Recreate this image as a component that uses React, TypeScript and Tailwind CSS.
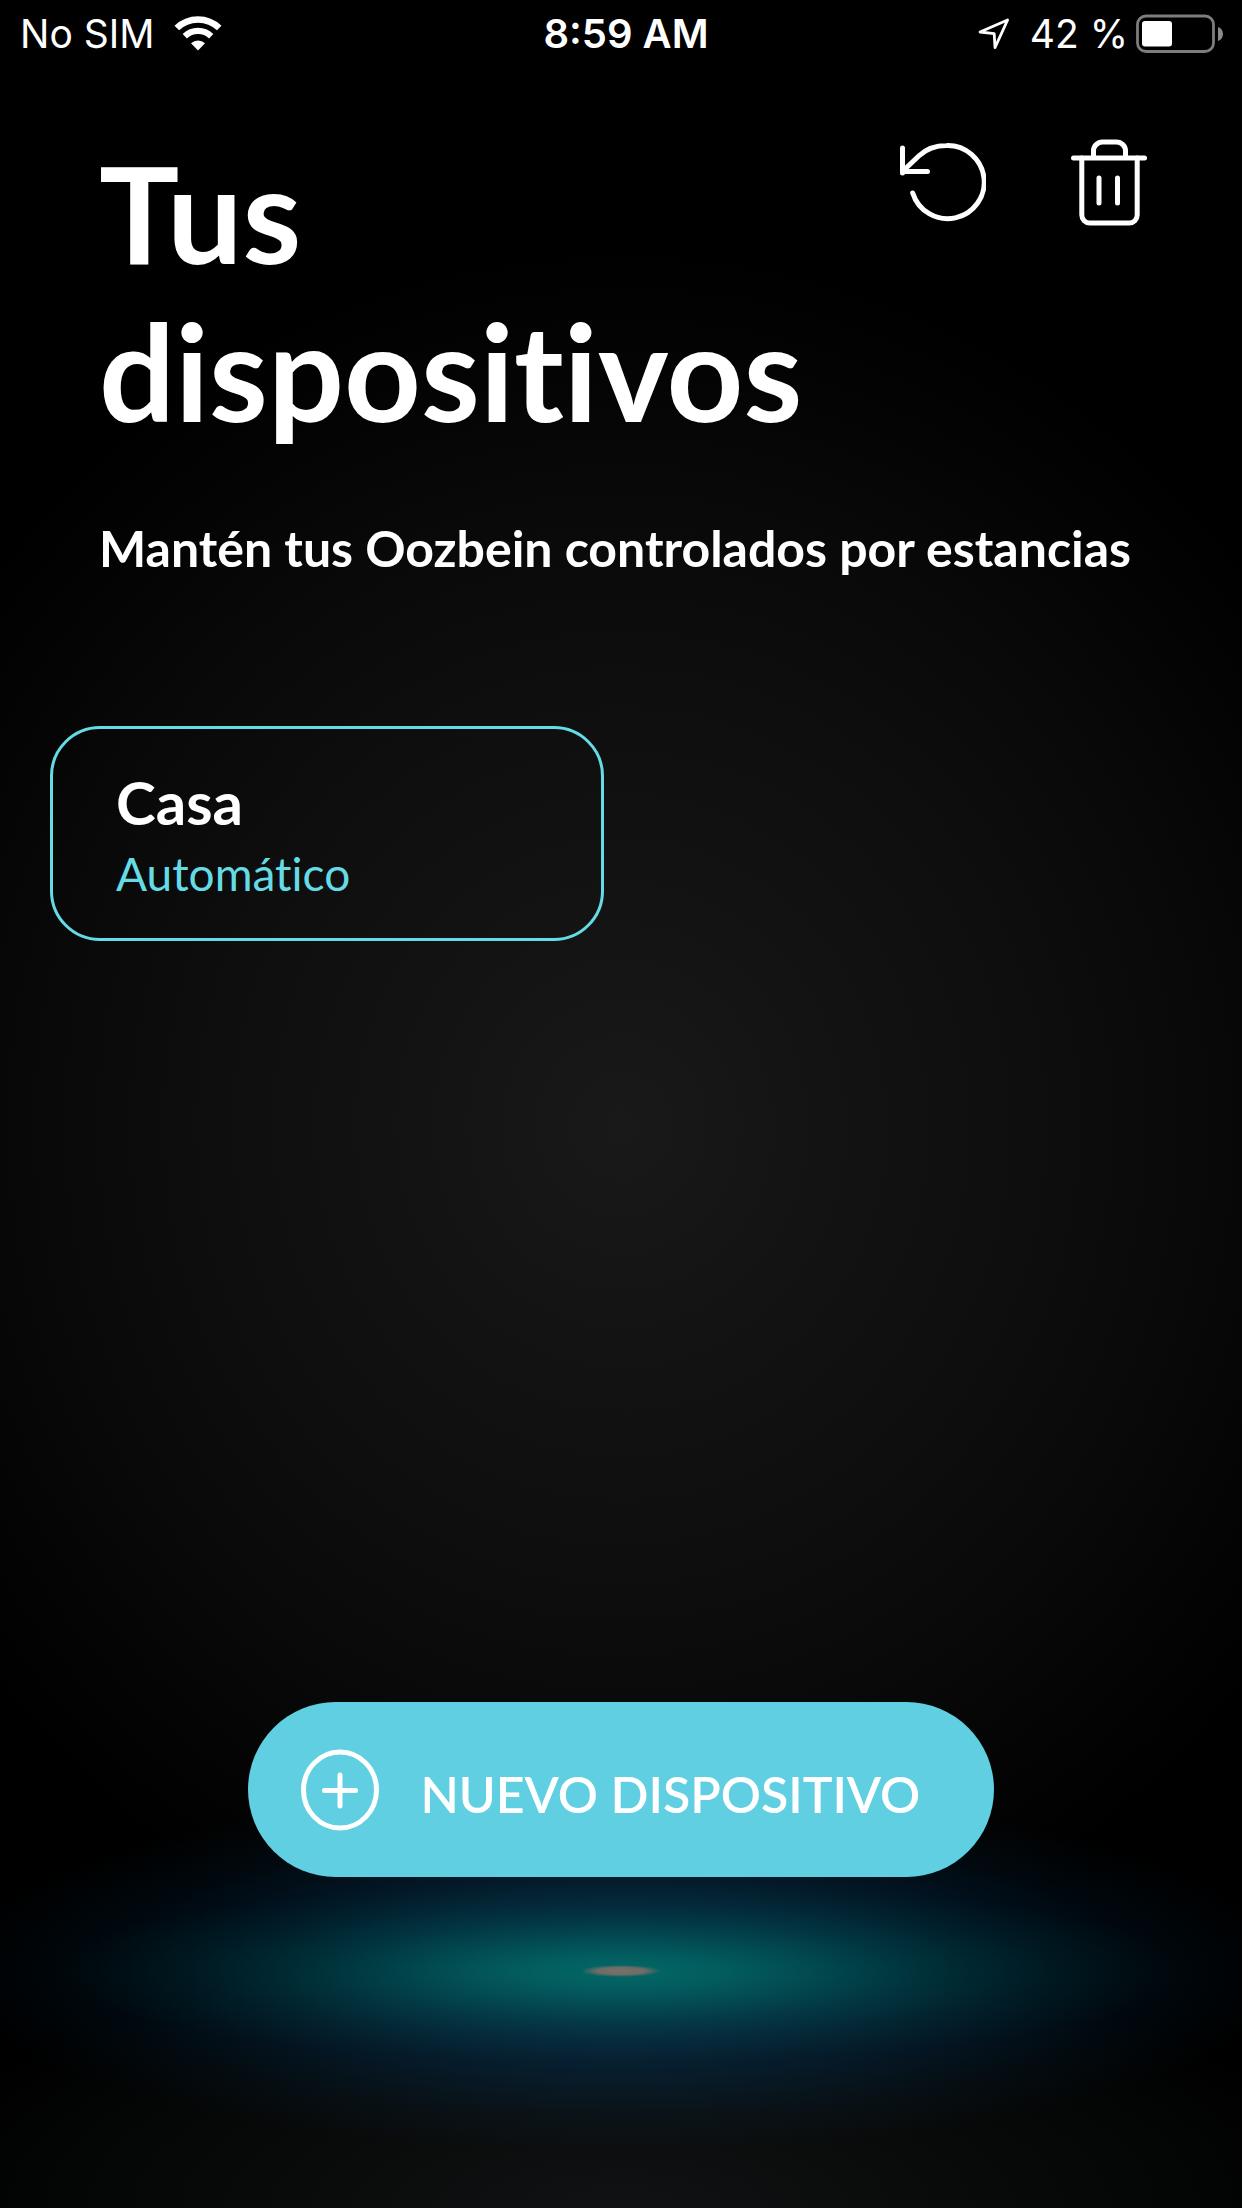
import type { ReactNode } from "react";

type Device = { id: string; name: string; mode: string };

const DEVICES: Device[] = [{ id: "casa", name: "Casa", mode: "Automático" }];

function WifiIcon() {
  return (
    <svg width="48" height="36" viewBox="0 0 48 36" fill="none" aria-hidden="true">
      <path d="M24 34.5 17 27.2a10.2 10.2 0 0 1 14 0Z" fill="#fff" />
      <path d="M10.8 20.2a19 19 0 0 1 26.4 0" stroke="#fff" strokeWidth="6.2" />
      <path d="M2.8 12a30.5 30.5 0 0 1 42.4 0" stroke="#fff" strokeWidth="6.6" />
    </svg>
  );
}

function LocationIcon() {
  return (
    <svg width="32" height="32" viewBox="0 0 32 32" fill="none" aria-hidden="true">
      <path
        d="M29.6 2 2 14l14.2 1.6L17 29.6Z"
        stroke="#fff"
        strokeWidth="2.8"
        strokeLinejoin="round"
      />
    </svg>
  );
}

function BatteryIcon() {
  return (
    <svg width="88" height="40" viewBox="0 0 88 40" fill="none" aria-hidden="true">
      <rect x="1.5" y="2" width="76" height="35.5" rx="8.5" stroke="#7d7d7d" strokeWidth="2.8" />
      <rect x="6" y="7" width="30" height="25.5" rx="3" fill="#fff" />
      <path d="M82 13c3 1 5 3.5 5 7s-2 6-5 7Z" fill="#8a8a8a" />
    </svg>
  );
}

function ResetIcon() {
  return (
    <svg width="88" height="84" viewBox="0 0 88 84" fill="none" aria-hidden="true">
      <g stroke="#fff" strokeWidth="5" strokeLinecap="round" strokeLinejoin="round">
        <path d="M5.5 30.5 21 15.8C28 9.2 36 5.5 48.5 5.5A36.6 36.6 0 1 1 14.7 53" />
        <path d="M4.5 8v25M4.5 31.5h25" />
      </g>
    </svg>
  );
}

function TrashIcon() {
  return (
    <svg width="78" height="88" viewBox="0 0 78 88" fill="none" aria-hidden="true">
      <g stroke="#fff" strokeWidth="5" strokeLinecap="round" strokeLinejoin="round">
        <path d="M3.5 20h71" />
        <path d="M23.5 19v-6a9 9 0 0 1 9-9h14a9 9 0 0 1 9 9v6" />
        <path d="M11.8 20v57a8 8 0 0 0 8 8h39.4a8 8 0 0 0 8-8V20" />
        <path d="M29 40v25M47.5 40v25" />
      </g>
    </svg>
  );
}

function PlusIcon() {
  return (
    <svg width="80" height="84" viewBox="0 0 80 84" fill="none" aria-hidden="true">
      <ellipse cx="40" cy="42" rx="36.5" ry="38" stroke="#fff" strokeWidth="5" />
      <path d="M40 27v31M24.5 42.5h31" stroke="#fff" strokeWidth="5" strokeLinecap="round" />
    </svg>
  );
}

function StatusBar() {
  return (
    <div className="grid h-[68px] grid-cols-[1fr_auto_1fr] items-center pr-[18px] pl-5 font-['Inter',sans-serif] text-[39px] leading-[48px]">
      <div className="flex items-center gap-5">
        <span>No SIM</span>
        <WifiIcon />
      </div>
      <span className="pl-2 text-[40px] font-semibold">8:59 AM</span>
      <div className="flex items-center justify-end">
        <LocationIcon />
        <span className="ml-5">42 %</span>
        <span className="ml-2">
          <BatteryIcon />
        </span>
      </div>
    </div>
  );
}

function IconButton({ label, children }: { label: string; children: ReactNode }) {
  return (
    <button type="button" aria-label={label} className="cursor-pointer">
      {children}
    </button>
  );
}

function DeviceCard({ device }: { device: Device }) {
  return (
    <button
      type="button"
      className="cursor-pointer rounded-[50px] border-[3px] border-[#65dbe6] px-[63px] pt-[37px] pb-[34px] text-left"
    >
      <span className="block text-[60px] leading-[72px] font-bold">{device.name}</span>
      <span className="block pt-[5px] text-[46px] leading-[61px] text-[#65dbe6]">
        {device.mode}
      </span>
    </button>
  );
}

// Dim spot mid-screen, faint floor light, then the flare under the button
function Backdrop() {
  return (
    <div className="absolute inset-0 -z-10 bg-black bg-[radial-gradient(ellipse_66%_40%_at_50%_51%,#191919_0%,#131313_25%,#0e0e0e_50%,#090909_70%,#040404_86%,#000000_100%)]">
      <div className="absolute inset-x-0 bottom-0 h-[474px] bg-[radial-gradient(ellipse_40px_6px_at_50%_50%,#781004_0%,#6b0c06_60%,#000000_100%),radial-gradient(ellipse_46%_90px_at_50%_50%,#004628_0%,#003c26_18%,#002a1a_36%,#00180e_54%,#000a06_74%,#000000_100%),radial-gradient(ellipse_54%_180px_at_50%_50%,#002c46_0%,#00243c_24%,#001c30_42%,#001220_60%,#00080e_78%,#000000_100%),radial-gradient(ellipse_60%_260px_at_50%_100%,#101213_0%,#080a0a_50%,#000000_100%)] bg-blend-screen mix-blend-screen" />
    </div>
  );
}

export default function App() {
  return (
    <div className="relative isolate flex min-h-screen flex-col font-['Lato',sans-serif] text-white [font-variant-ligatures:no-common-ligatures]">
      <Backdrop />
      <StatusBar />

      <header className="flex items-start justify-between pr-[94px] pl-[99px]">
        <h1 className="pt-[66px] text-[134px] leading-[158px] font-bold">
          Tus
          <br />
          dispositivos
        </h1>
        <div className="flex gap-[84px] pt-[70px]">
          <IconButton label="Restablecer">
            <ResetIcon />
          </IconButton>
          <IconButton label="Eliminar">
            <TrashIcon />
          </IconButton>
        </div>
      </header>

      <p className="px-[99px] pt-[68px] text-[50px] leading-[60px] font-bold">
        Mantén tus Oozbein controlados por estancias
      </p>

      <main className="grid flex-1 grid-cols-2 content-start gap-[34px] px-[50px] pt-[148px]">
        {DEVICES.map((device) => (
          <DeviceCard key={device.id} device={device} />
        ))}
      </main>

      <footer className="flex justify-center pb-[331px]">
        <button
          type="button"
          className="flex h-[175px] w-3/5 cursor-pointer items-center gap-10 rounded-full bg-[#5fcfe1] pl-[52px] text-[50px] leading-[60px] font-semibold whitespace-nowrap"
        >
          <PlusIcon />
          <span className="pt-2">NUEVO DISPOSITIVO</span>
        </button>
      </footer>
    </div>
  );
}
